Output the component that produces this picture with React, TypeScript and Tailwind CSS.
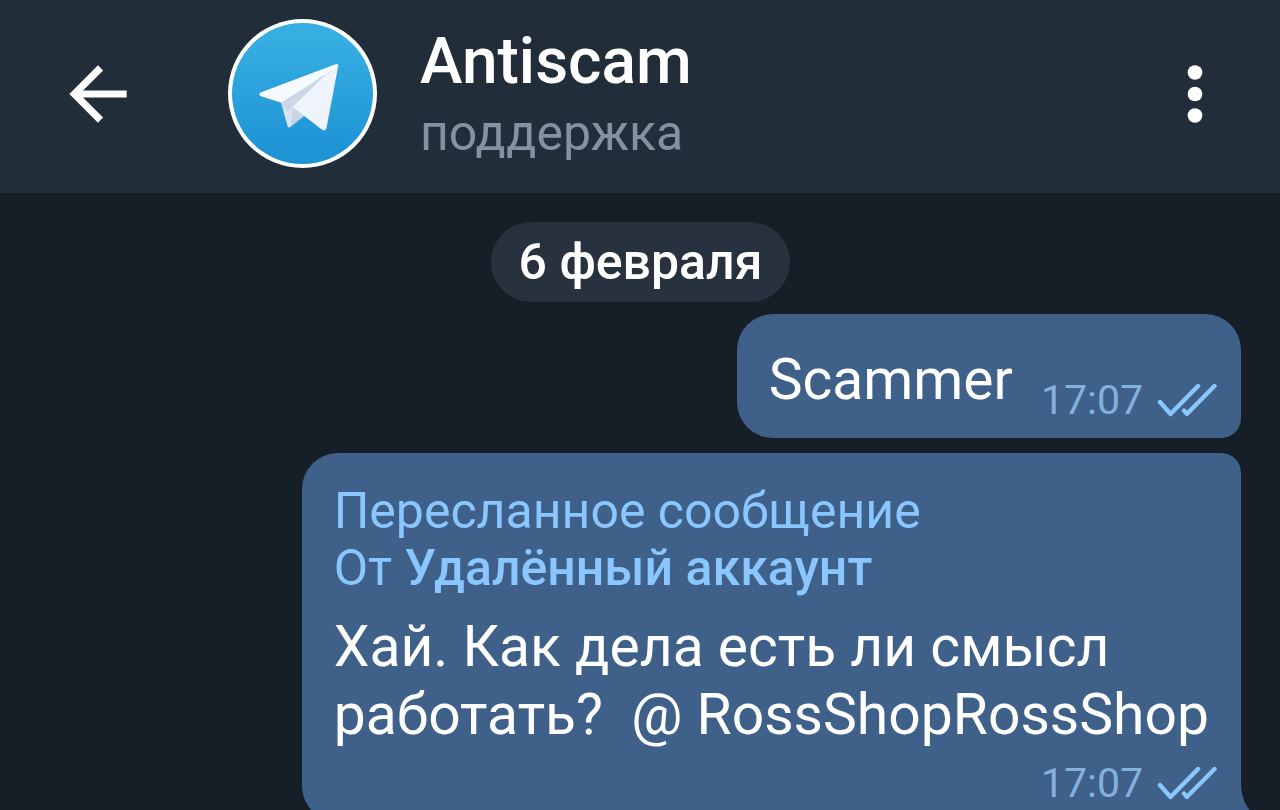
function BackIcon() {
  return (
    <svg viewBox="0 0 24 24" className="size-[86px]" fill="currentColor" aria-hidden="true">
      <path d="M20 11H7.83l5.590-5.590L12 4l-8 8 8 8 1.410-1.410L7.830 13H20v-2z" />
    </svg>
  );
}

function MoreIcon() {
  return (
    <svg viewBox="0 0 24 24" className="size-[86px]" fill="currentColor" aria-hidden="true">
      <circle cx="12" cy="6" r="2.05" />
      <circle cx="12" cy="12" r="2.05" />
      <circle cx="12" cy="18" r="2.05" />
    </svg>
  );
}

function Avatar() {
  return (
    <svg viewBox="0 0 150 150" className="size-[150px] shrink-0" aria-hidden="true">
      <defs>
        <linearGradient id="sky" x1="0" y1="0" x2="0" y2="1">
          <stop offset="0.1" stopColor="#37aee2" />
          <stop offset="0.9" stopColor="#1e94d5" />
        </linearGradient>
      </defs>
      <circle cx="74.5" cy="74.5" r="74.5" fill="#fff" />
      <circle cx="74.5" cy="74.5" r="70.5" fill="url(#sky)" />
      <path d="M53 82L60 107Q61 109 63 107.5L75 98L98 56Z" fill="#c8d5e6" />
      <path d="M53 83L59.5 107Q60.5 109.5 62.5 107.5L65 88L70 78Z" fill="#dbe4f1" />
      <path d="M32.5 73.5L107.5 45.2Q110.5 44.5 110.3 47.5L97.5 55.5L54 84L32.5 77Q30 75.3 32.5 73.5Z" fill="#f8fbfe" />
      <path d="M53 83.5L98 55.5L64 88L60 93Z" fill="#cbd6e6" />
      <path d="M97.5 55.5L110.3 46.5L98.5 109Q97.500 112.5 94.500 111L64.500 88Z" fill="#eff3fb" />
    </svg>
  );
}

function ReadChecks() {
  return (
    <svg
      viewBox="0 0 60 36"
      className="h-9 w-[60px]"
      fill="none"
      stroke="#8ac6ff"
      strokeWidth="4.4"
      strokeLinecap="round"
      strokeLinejoin="round"
      role="img"
      aria-label="Прочитано"
    >
      <path d="M3 20L13.5 32L41 4" />
      <path d="M27 28.5L29.8 32L57.5 4" />
    </svg>
  );
}

function Stamp({ time }: { time: string }) {
  return (
    <span className="flex items-center gap-3.5 text-[41px] leading-[48px] text-[#84b1da]">
      <time>{time}</time>
      <ReadChecks />
    </span>
  );
}

export default function App() {
  return (
    <div className="flex h-screen flex-col overflow-hidden bg-[#161e27] font-['Roboto','Noto_Sans',sans-serif] text-white">
      <header className="flex shrink-0 items-center bg-[#222d3a] pt-[19px] pr-[42px] pb-6 pl-[55px]">
        <button type="button" aria-label="Назад" className="shrink-0">
          <BackIcon />
        </button>
        <div className="ml-[87px]">
          <Avatar />
        </div>
        <div className="ml-[42px] flex min-w-0 flex-1 flex-col pt-[7px]">
          <h1 className="text-[64px] leading-[72px] font-medium">Antiscam</h1>
          <p className="text-[50px] leading-[71px] text-[#8391a0]">поддержка</p>
        </div>
        <button type="button" aria-label="Меню" className="shrink-0">
          <MoreIcon />
        </button>
      </header>

      <main className="flex flex-1 flex-col pt-[29px] pr-[39px] pl-10">
        <p className="self-center rounded-full bg-[#28323e] px-7 text-[50px] leading-[80px] font-medium">
          6 февраля
        </p>

        <article className="mt-3 flex items-end gap-7 self-end rounded-[36px] rounded-br-[20px] bg-[#3f6189] pt-8 pr-6 pb-[14px] pl-8">
          <p className="mb-[10px] text-[57px] leading-[68px]">Scammer</p>
          <Stamp time="17:07" />
        </article>

        <article className="relative mt-[15px] flex flex-col self-end rounded-[36px] rounded-tr-[20px] rounded-br-none bg-[#3f6189] pt-[30px] pr-6 pb-[15px] pl-8">
          <p className="text-[50px] leading-[57px] text-[#8ac6ff]">
            Пересланное сообщение
            <br />
            От <b className="font-medium">Удалённый аккаунт</b>
          </p>
          <p className="mt-4 pr-2 text-[57px] leading-[68px] whitespace-pre-wrap">
            {"Хай. Как дела есть ли смысл\nработать?  @ RossShopRossShop"}
          </p>
          <div className="mt-[10px] self-end">
            <Stamp time="17:07" />
          </div>
          <svg viewBox="0 0 20 40" className="absolute bottom-0 left-full h-10 w-5" fill="#3f6189" aria-hidden="true">
            <path d="M0 0C0 17 6 29 19 37Q21 40 16 40H0Z" />
          </svg>
        </article>
      </main>
    </div>
  );
}
